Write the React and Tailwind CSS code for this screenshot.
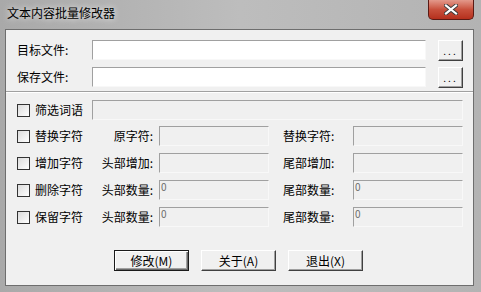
const font = { fontFamily: '"Noto Sans CJK SC", "Noto Sans", sans-serif' };

function Edit({ w, disabled, value }) {
  return (
    <div
      className={`${w} h-[20px] border-t border-l border-t-[#a0a0a0] border-l-[#a0a0a0] border-b border-r border-b-[#f8f8f8] border-r-[#f8f8f8] ${
        disabled ? 'bg-[#f0f0f0]' : 'bg-white'
      }`}
    >
      {value && (
        <div className="pl-[1px] text-[10px] leading-[11px] text-[#6d6d6d]">{value}</div>
      )}
    </div>
  );
}

function Check({ label }) {
  return (
    <div className="w-[86px] pl-[11px] flex items-center gap-[5px]">
      <div className="w-[13px] h-[13px] border border-[#333] bg-gradient-to-br from-[#dcdcdc] to-white shrink-0" />
      <span className="text-[12px] leading-[20px] text-black">{label}</span>
    </div>
  );
}

function Btn({ children, def }) {
  return (
    <div
      className={`w-[75px] h-[21px] flex items-center justify-center text-[12px] text-black bg-[#f0f0f0] ${
        def
          ? 'border border-[#1a1a1a] shadow-[inset_1px_1px_0_#fff,inset_-1px_-1px_0_#696969,inset_-2px_-2px_0_#a0a0a0]'
          : 'border-t border-l border-t-white border-l-white border-b border-r border-b-[#404040] border-r-[#404040] shadow-[inset_-1px_-1px_0_#a0a0a0]'
      }`}
    >
      {children}
    </div>
  );
}

const rows = [
  { check: '替换字符', left: '原字符:', right: '替换字符:' },
  { check: '增加字符', left: '头部增加:', right: '尾部增加:' },
  { check: '删除字符', left: '头部数量:', right: '尾部数量:', value: '0' },
  { check: '保留字符', left: '头部数量:', right: '尾部数量:', value: '0' },
];

export default function App() {
  return (
    <div
      className="w-[481px] h-[292px] flex flex-col bg-gradient-to-r from-[#a9a9a9] via-[#bdbdbd] to-[#b3b3b3] overflow-hidden"
      style={font}
    >
      {/* title bar */}
      <div className="h-[29px] flex items-start justify-between shrink-0">
        <div className="pl-[7px] pt-[5px] text-[12px] leading-[16px] text-black [text-shadow:0_0_6px_#fff]">
          文本内容批量修改器
        </div>
        <div className="mr-[7px] w-[46px] h-[20px] rounded-b-[5px] border border-t-0 border-[#5a1a14] bg-gradient-to-b from-[#e3998b] via-[#c8503c] to-[#b52f1c] flex items-center justify-center">
          <svg width="14" height="11" viewBox="0 0 14 11">
            <path d="M2 1.5 L12 9.5 M12 1.5 L2 9.5" stroke="#3a3a3a" strokeWidth="4" strokeLinecap="square" />
            <path d="M2 1.5 L12 9.5 M12 1.5 L2 9.5" stroke="#fff" strokeWidth="2.2" strokeLinecap="square" />
          </svg>
        </div>
      </div>

      {/* client area */}
      <div className="ml-[5px] mr-[7px] h-[257px] border border-[#6e6e6e] bg-[#f0f0f0] flex flex-col text-black">
        {['目标文件:', '保存文件:'].map((label, i) => (
          <div key={label} className={`${i === 0 ? 'mt-[10px]' : 'mt-[6px]'} h-[21px] flex items-start`}>
            <div className="w-[86px] pl-[11px] text-[12px] leading-[19px]">{label}</div>
            <Edit w="w-[334px]" />
            <div className="ml-[12px] w-[25px] h-[21px] flex items-end justify-center pb-[4px] bg-[#f0f0f0] border-t border-l border-t-white border-l-white border-b border-r border-b-[#404040] border-r-[#404040] shadow-[inset_-1px_-1px_0_#a0a0a0] text-[10px] leading-none tracking-[2px]">
              ...
            </div>
          </div>
        ))}

        <div className="mt-[3px] h-[2px] border-t border-[#a0a0a0] border-b border-b-white" />

        <div className="mt-[7px] h-[20px] flex items-center">
          <Check label="筛选词语" />
          <Edit w="w-[371px]" disabled />
        </div>

        {rows.map((r, i) => (
          <div key={i} className={`${i === 0 ? 'mt-[6px]' : 'mt-[7px]'} h-[20px] flex items-center`}>
            <Check label={r.check} />
            <div className="w-[67px] pr-[6px] text-right text-[12px] leading-[20px]">{r.left}</div>
            <Edit w="w-[110px]" disabled value={r.value} />
            <div className="ml-[14px] w-[70px] text-[12px] leading-[20px]">{r.right}</div>
            <Edit w="w-[110px]" disabled value={r.value} />
          </div>
        ))}

        <div className="mt-[23px] pl-[108px] flex gap-[12px]">
          <Btn def>修改(M)</Btn>
          <Btn>关于(A)</Btn>
          <Btn>退出(X)</Btn>
        </div>
      </div>
    </div>
  );
}
